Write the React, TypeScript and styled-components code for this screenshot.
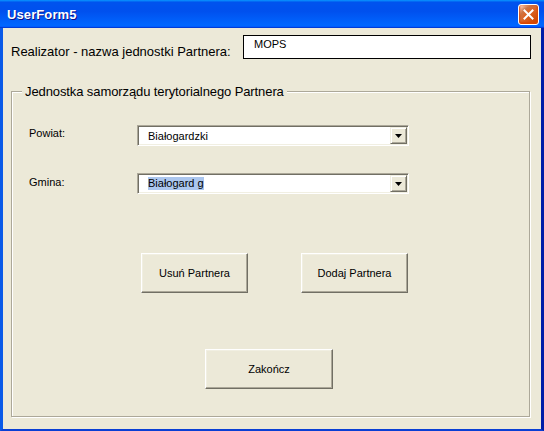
import styled, { createGlobalStyle } from 'styled-components';

const GlobalStyle = createGlobalStyle`
  html,
  body {
    margin: 0;
    padding: 0;
    background: #ece9d8;
  }

  body {
    font-family: 'Liberation Sans', Arial, sans-serif;
  }
`;

const Window = styled.div`
  width: 544px;
  height: 431px;
  display: flex;
  flex-direction: column;
  overflow: hidden;
  background: #0831d9;
`;

const TitleBar = styled.div`
  height: 28px;
  flex-shrink: 0;
  display: flex;
  align-items: center;
  justify-content: space-between;
  padding: 0 5px 0 7px;
  box-sizing: border-box;
  background: linear-gradient(
    180deg,
    #0997ff,
    #0053ee 8%,
    #0050ee 40%,
    #06f 88%,
    #06f 93%,
    #005bff 95%,
    #003dd7 96%,
    #003dd7
  );
`;

const TitleText = styled.span`
  color: #fff;
  font-size: 13px;
  font-weight: 700;
  letter-spacing: 0.1px;
  text-shadow: 1px 1px #0f1089;
`;

const CloseButton = styled.button`
  width: 21px;
  height: 21px;
  padding: 0;
  display: flex;
  align-items: center;
  justify-content: center;
  border: 1px solid #fff;
  border-radius: 3px;
  background: radial-gradient(
    circle at 90% 90%,
    #cc4600 0%,
    #dc6527 55%,
    #cd7546 70%,
    #ffccb2 90%,
    #fff 100%
  );
  box-shadow: inset 0 -1px 2px 1px #da4600;
`;

const Body = styled.div`
  flex: 1;
  display: flex;
  flex-direction: column;
  background: #ece9d8;
  border-left: 3px solid #0a5ae8;
  border-right: 3px solid #001ca8;
  border-bottom: 2px solid #0a3fd4;
  min-height: 0;
`;

const TopRow = styled.div`
  display: flex;
  align-items: flex-start;
  padding: 7px 0 0 8px;
`;

const BigLabel = styled.span`
  width: 232px;
  margin-top: 9px;
  font-size: 13px;
  line-height: 16px;
  color: #000;
`;

const TextBox = styled.div`
  width: 288px;
  height: 24px;
  box-sizing: border-box;
  border: 1px solid #000;
  background: #fff;
  padding: 2px 10px;
  font-size: 11px;
  line-height: 13px;
  color: #000;
`;

const Frame = styled.div`
  position: relative;
  flex: 1;
  margin: 31px 11px 12px 8px;
  padding: 33px 0 0 17px;
  border: 1px solid #aca899;
  box-shadow: 1px 1px 0 #fff, inset 1px 1px 0 #fff;
  display: flex;
  flex-direction: column;
  align-items: flex-start;
`;

const Legend = styled.span`
  position: absolute;
  top: -8px;
  left: 10px;
  padding: 0 3px;
  background: #ece9d8;
  font-size: 13px;
  line-height: 16px;
  letter-spacing: -0.1px;
  color: #000;
`;

const Fields = styled.div`
  display: grid;
  grid-template-columns: 108px 272px;
  row-gap: 27px;
`;

const FieldLabel = styled.span<{ $offset: number }>`
  margin-top: ${({ $offset }) => $offset}px;
  font-size: 11px;
  line-height: 13px;
  color: #000;
`;

const Combo = styled.div`
  height: 21px;
  box-sizing: border-box;
  display: flex;
  align-items: stretch;
  background: #fff;
  border: 1px solid;
  border-color: #aca899 #fff #fff #aca899;
  box-shadow: inset 1px 1px 0 #716f64, inset -1px -1px 0 #f1efe2;
  padding: 1px;
`;

const ComboText = styled.span`
  flex: 1;
  display: flex;
  align-items: center;
  padding-left: 9px;
  font-size: 11px;
  color: #000;
`;

const Selected = styled.span`
  background: #abc6ee;
  line-height: 13px;
`;

const DropButton = styled.div`
  width: 17px;
  box-sizing: border-box;
  display: flex;
  align-items: center;
  justify-content: center;
  background: #ece9d8;
  border: 1px solid;
  border-color: #f1efe2 #716f64 #716f64 #f1efe2;
  box-shadow: inset 1px 1px 0 #fff, inset -1px -1px 0 #aca899;
`;

const ButtonRow = styled.div`
  display: flex;
  gap: 53px;
  margin: 59px 0 0 112px;
`;

const FormButton = styled.button<{ $width: number }>`
  width: ${({ $width }) => $width}px;
  height: 40px;
  padding: 0;
  box-sizing: border-box;
  background: #ece9d8;
  border: 1px solid;
  border-color: #fff #716f64 #716f64 #fff;
  box-shadow: inset -1px -1px 0 #aca899, inset 1px 1px 0 #f1efe2;
  font-family: 'Liberation Sans', Arial, sans-serif;
  font-size: 11px;
  color: #000;
`;

const CloseRow = styled.div`
  margin: 56px 0 0 176px;
`;

function CloseIcon() {
  return (
    <svg width="11" height="11" viewBox="0 0 11 11">
      <path d="M1.5 1.5 L9.5 9.5 M9.5 1.5 L1.5 9.5" stroke="#fff" strokeWidth="2" strokeLinecap="square" />
    </svg>
  );
}

function ArrowIcon() {
  return (
    <svg width="7" height="4" viewBox="0 0 7 4">
      <polygon points="0,0 7,0 3.5,4" fill="#000" />
    </svg>
  );
}

interface IComboProps {
  value: string;
  selected?: boolean;
}

function ComboBox({ value, selected }: IComboProps) {
  return (
    <Combo>
      <ComboText>{selected ? <Selected>{value}</Selected> : value}</ComboText>
      <DropButton>
        <ArrowIcon />
      </DropButton>
    </Combo>
  );
}

export default function App() {
  return (
    <>
      <GlobalStyle />
      <Window>
        <TitleBar>
          <TitleText>UserForm5</TitleText>
          <CloseButton aria-label="Close">
            <CloseIcon />
          </CloseButton>
        </TitleBar>
        <Body>
          <TopRow>
            <BigLabel>Realizator - nazwa jednostki Partnera:</BigLabel>
            <TextBox>MOPS</TextBox>
          </TopRow>
          <Frame>
            <Legend>Jednostka samorządu terytorialnego Partnera</Legend>
            <Fields>
              <FieldLabel $offset={2}>Powiat:</FieldLabel>
              <ComboBox value="Białogardzki" />
              <FieldLabel $offset={3}>Gmina:</FieldLabel>
              <ComboBox value="Białogard g" selected />
            </Fields>
            <ButtonRow>
              <FormButton $width={107}>Usuń Partnera</FormButton>
              <FormButton $width={107}>Dodaj Partnera</FormButton>
            </ButtonRow>
            <CloseRow>
              <FormButton $width={128}>Zakończ</FormButton>
            </CloseRow>
          </Frame>
        </Body>
      </Window>
    </>
  );
}
